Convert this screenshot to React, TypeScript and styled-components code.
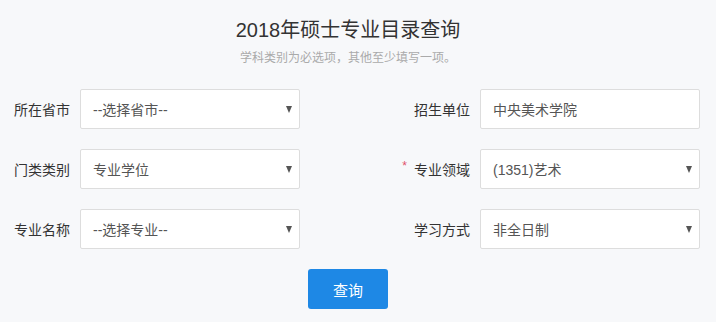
import React from "react";
import styled, { createGlobalStyle } from "styled-components";

const Global = createGlobalStyle`
  html, body { margin: 0; padding: 0; background: #f7f8fa; }
  body { font-family: "Liberation Sans", "Noto Sans CJK SC", sans-serif; color: #333; }
`;

const Page = styled.div`
  width: 700px;
  padding-top: 16px;
`;

const Header = styled.div`
  width: 696px;
  text-align: center;
`;

const Title = styled.h1`
  margin: 0;
  font-size: 20px;
  font-weight: normal;
  line-height: 28px;
  color: #333;
`;

const Sub = styled.p`
  margin: 6px 0 0;
  font-size: 12px;
  line-height: 16px;
  color: #aaa;
`;

const Form = styled.div`
  margin-top: 23px;
  display: grid;
  grid-template-columns: 300px 300px;
  column-gap: 100px;
  row-gap: 20px;
`;

const Field = styled.div`
  display: flex;
  align-items: center;
  height: 40px;
`;

const Label = styled.label`
  width: 70px;
  padding-right: 10px;
  text-align: right;
  font-size: 14px;
  color: #333;
  white-space: nowrap;
`;

const Star = styled.span`
  color: #e0506a;
  font-size: 12px;
  margin-right: 7px;
  vertical-align: top;
`;

const Box = styled.div`
  position: relative;
  box-sizing: border-box;
  width: 220px;
  height: 40px;
  background: #fff;
  border: 1px solid #ddd;
  border-radius: 2px;
  display: flex;
  align-items: center;
  padding: 0 12px;
  font-size: 14px;
  color: #555;
`;

const Arrow = styled.span`
  position: absolute;
  right: 7px;
  top: 16px;
  width: 0;
  height: 0;
  border-left: 3.5px solid transparent;
  border-right: 3.5px solid transparent;
  border-top: 7px solid #555;
`;

const Actions = styled.div`
  width: 696px;
  display: flex;
  justify-content: center;
  margin-top: 20px;
`;

const Button = styled.button`
  width: 80px;
  height: 40px;
  border: none;
  border-radius: 3px;
  background: #1e88e5;
  color: #fff;
  font-family: inherit;
  font-size: 15px;
  cursor: pointer;
`;

type F = { label: string; value: string; select: boolean; required?: boolean };

const fields: F[] = [
  { label: "所在省市", value: "--选择省市--", select: true },
  { label: "招生单位", value: "中央美术学院", select: false },
  { label: "门类类别", value: "专业学位", select: true },
  { label: "专业领域", value: "(1351)艺术", select: true, required: true },
  { label: "专业名称", value: "--选择专业--", select: true },
  { label: "学习方式", value: "非全日制", select: true },
];

export default function App() {
  return (
    <>
      <Global />
      <Page>
        <Header>
          <Title>2018年硕士专业目录查询</Title>
          <Sub>学科类别为必选项，其他至少填写一项。</Sub>
        </Header>
        <Form>
          {fields.map((f) => (
            <Field key={f.label}>
              <Label>
                {f.required && <Star>*</Star>}
                {f.label}
              </Label>
              <Box>
                {f.value}
                {f.select && <Arrow />}
              </Box>
            </Field>
          ))}
        </Form>
        <Actions>
          <Button>查询</Button>
        </Actions>
      </Page>
    </>
  );
}
